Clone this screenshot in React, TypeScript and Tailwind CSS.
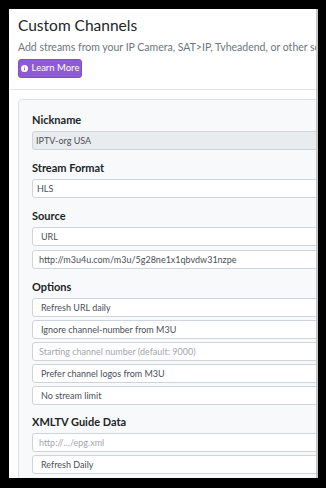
import React from 'react';

const font = { fontFamily: 'Lato, "Open Sans", sans-serif' };

const Label: React.FC<{ children: React.ReactNode }> = ({ children }) => (
  <div className="h-[14px] leading-[14px] text-[11px] font-bold text-[#212529] mb-[4px]">{children}</div>
);

const Field: React.FC<{ text: string; pad?: string; muted?: boolean; disabled?: boolean }> = ({ text, pad = 'pl-[8px]', muted, disabled }) => (
  <div
    className={`h-[19px] flex items-center rounded-[3px] border border-[#ced4da] text-[9px] whitespace-nowrap ${pad} ${
      disabled ? 'bg-[#e9ecef]' : 'bg-white'
    } ${muted ? 'text-[#a3a8ad]' : 'text-[#495057]'}`}
  >
    {text}
  </div>
);

export default function App() {
  const options = [
    { text: 'Refresh URL daily' },
    { text: 'Ignore channel-number from M3U' },
    { text: 'Starting channel number (default: 9000)', muted: true, pad: 'pl-[6px]' },
    { text: 'Prefer channel logos from M3U' },
    { text: 'No stream limit' },
  ];

  return (
    <div className="w-[326px] h-[488px] bg-black pt-[9px] pl-[9px]" style={font}>
      <div className="w-[309px] h-[469px] bg-white border-r-2 border-[#c4c4c4] overflow-hidden">
        <div className="pl-[9px] pt-[6px]">
          <h1 className="text-[15.5px] leading-[20px] text-[#212529] whitespace-nowrap">Custom Channels</h1>
          <p className="mt-[5px] text-[10.5px] leading-[14px] text-[#6c757d] whitespace-nowrap">
            Add streams from your IP Camera, SAT&gt;IP, Tvheadend, or other software
          </p>
          <button className="mt-[5px] h-[19px] w-[64px] rounded-[3px] bg-[#8d5bd7] border border-[#7f4fcc] text-white text-[9.5px] whitespace-nowrap flex items-center justify-center gap-[4px]">
            <svg width="7" height="7" viewBox="0 0 16 16">
              <circle cx="8" cy="8" r="8" fill="white" />
              <rect x="7" y="7" width="2" height="5" fill="#8d5bd7" />
              <circle cx="8" cy="4.6" r="1.1" fill="#8d5bd7" />
            </svg>
            Learn More
          </button>
        </div>
        <div className="mt-[11px] border-t border-[#e3e5e8]" />
        <div className="pl-[9px] pt-[9px]">
          <div className="w-[330px] bg-[#f8f9fa] border border-[#dee2e6] rounded-[4px] pl-[13px] pt-[13px] pb-[20px] flex flex-col">
            <Label>Nickname</Label>
            <Field text="IPTV-org USA" pad="pl-[3px]" disabled />

            <div className="mt-[11px]" />
            <Label>Stream Format</Label>
            <Field text="HLS" pad="pl-[4px]" />

            <div className="mt-[11px]" />
            <Label>Source</Label>
            <div className="flex flex-col gap-[4px]">
              <Field text="URL" />
              <Field text="http://m3u4u.com/m3u/5g28ne1x1qbvdw31nzpe" pad="pl-[6px]" />
            </div>

            <div className="mt-[11px]" />
            <Label>Options</Label>
            <div className="flex flex-col gap-[3px]">
              {options.map(o => (
                <Field key={o.text} text={o.text} muted={o.muted} pad={o.pad} />
              ))}
            </div>

            <div className="mt-[10px]" />
            <Label>XMLTV Guide Data</Label>
            <div className="flex flex-col gap-[3px]">
              <Field text="http://.../epg.xml" muted pad="pl-[6px]" />
              <Field text="Refresh Daily" />
            </div>
          </div>
        </div>
      </div>
    </div>
  );
}
